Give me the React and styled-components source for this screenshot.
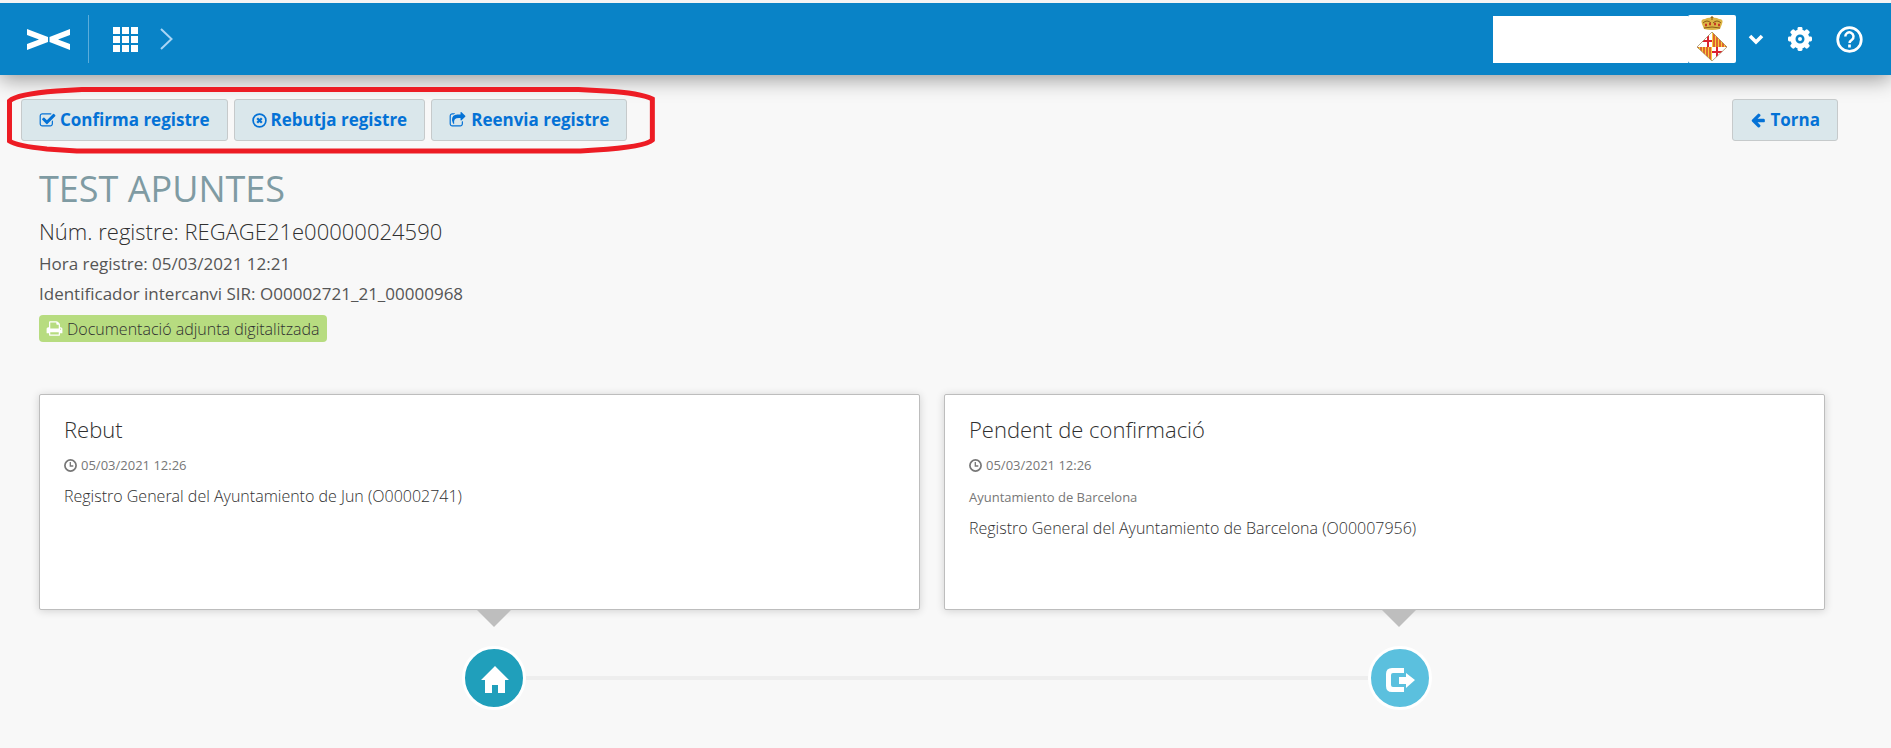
import React from 'react';
import styled, { createGlobalStyle } from 'styled-components';

const GlobalStyle = createGlobalStyle`
  *,
  *::before,
  *::after {
    box-sizing: border-box;
  }

  body {
    margin: 0;
    background: #f8f8f8;
    color: #303030;
    font-family: 'Open Sans', 'Noto Sans', sans-serif;
    font-size: 16px;
    font-weight: 300;
  }

  h1, h2, p {
    margin: 0;
    font-weight: 300;
  }

  svg {
    display: block;
    flex: none;
  }
`;

const StyledHeader = styled.header`
  display: flex;
  align-items: center;
  justify-content: space-between;
  height: 75px;
  padding: 0 28px 0 27px;
  border-top: 3px solid #f4f4f4;
  background: #0983c7;
  box-shadow: 0 4px 20px rgba(0, 0, 0, 0.4);
`;

const HeaderGroup = styled.div`
  display: flex;
  align-items: center;
`;

const HeaderLink = styled.a`
  display: flex;
  color: #fff;
`;

const Divider = styled.span`
  width: 1px;
  height: 48px;
  margin: 0 24px 0 18px;
  background: #5aaddb;
`;

const Crumb = styled.span`
  margin-left: 22px;
  color: #a9d5f5;
`;

const IconButton = styled.button`
  display: flex;
  padding: 0;
  border: 0;
  background: none;
  color: #fff;
  cursor: pointer;
`;

const Account = styled.div`
  display: flex;
  align-items: center;
  margin-right: 12px;
`;

const AccountName = styled.span`
  width: 195px;
  height: 47px;
  background: #fff;
`;

const Crest = styled.span`
  display: flex;
  justify-content: center;
  width: 48px;
  height: 48px;
  border-radius: 2px;
  background: #fff;
`;

const HeaderTools = styled.div`
  display: flex;
  align-items: center;
  gap: 24px;
`;

const Toolbar = styled.div`
  display: flex;
  align-items: center;
  justify-content: space-between;
  padding: 12px 53px 0 7px;
`;

const Actions = styled.div`
  position: relative;
  display: flex;
  gap: 6px;
  padding: 12px 28px 12px 14px;
`;

const Outline = styled.svg`
  position: absolute;
  inset: 0;
  width: 100%;
  height: 100%;
  overflow: visible;
  pointer-events: none;
`;

const Button = styled.button`
  display: flex;
  align-items: center;
  gap: ${({ $gap }) => $gap || 4}px;
  height: 42px;
  padding: 0 17px;
  border: 1px solid #c6cacb;
  border-radius: 3px;
  background: #dae7eb;
  color: #0472d6;
  font-family: inherit;
  font-size: 17px;
  font-weight: 700;
  line-height: 24px;
  white-space: nowrap;
  cursor: pointer;
`;

const Main = styled.main`
  padding: 11px 66px 0 39px;
`;

const Title = styled.h1`
  color: #7f9ba3;
  font-size: 36px;
  font-weight: 400;
  line-height: 49px;
`;

const Subtitle = styled.h2`
  font-size: 22px;
  line-height: 36px;
`;

const Meta = styled.p`
  color: #555;
  font-size: 17px;
  font-weight: 400;
  line-height: 30px;
`;

const Badge = styled.span`
  display: inline-flex;
  align-items: center;
  gap: 4px;
  height: 27px;
  margin-top: 6px;
  padding: 0 7px;
  border-radius: 4px;
  background: #b7dc80;
  white-space: nowrap;

  svg {
    color: #fff;
  }
`;

const Cards = styled.div`
  display: grid;
  grid-template-columns: 1fr 1fr;
  gap: 24px;
  margin-top: 52px;
`;

const StyledCard = styled.section`
  position: relative;
  min-height: 216px;
  padding: 15px 24px;
  border: 1px solid #bdbdbd;
  border-radius: 2px;
  background: #fff;
  box-shadow: 0 1px 8px rgba(0, 0, 0, 0.16);

  &::after {
    content: '';
    position: absolute;
    top: 100%;
    left: calc(50% - 4px);
    border: 18px solid transparent;
    border-top-color: #bebebe;
    border-bottom: 0;
  }
`;

const CardTitle = styled.h2`
  font-size: 22px;
  line-height: 39px;
`;

const CardNote = styled.p`
  display: flex;
  align-items: center;
  gap: 4px;
  color: #777;
  font-size: 13px;
  font-weight: 400;
  line-height: 32px;
`;

const CardText = styled.p`
  font-size: 16px;
  line-height: 30px;
`;

const Track = styled.div`
  display: flex;
  align-items: center;
  margin: 36px calc(25% - 53px) 0 calc(25% - 24px);
`;

const TrackLine = styled.span`
  flex: 1;
  height: 4px;
  background: #eee;
`;

const Marker = styled.span`
  display: flex;
  align-items: center;
  justify-content: center;
  width: 64px;
  height: 64px;
  padding: 4px 0 0 2px;
  border: 3px solid #fff;
  border-radius: 50%;
  background: ${({ $color }) => $color};
  color: #fff;
`;

const paths = {
  check:
    'M1472 930v318q0 119-84.5 203.5t-203.5 84.5h-832q-119 0-203.5-84.5t-84.5-203.5v-832q0-119 84.5-203.5t203.5-84.5h832q63 0 117 25 15 7 18 23 3 17-9 29l-49 49q-10 10-23 10-3 0-9-2-23-6-45-6h-832q-66 0-113 47t-47 113v832q0 66 47 113t113 47h832q66 0 113-47t47-113v-254q0-13 9-22l64-64q10-10 23-10 6 0 12 3 20 8 20 29zm231-489l-814 814q-24 24-57 24t-57-24l-430-430q-24-24-24-57t24-57l110-110q24-24 57-24t57 24l263 263 647-647q24-24 57-24t57 24l110 110q24 24 24 57t-24 57z',
  share:
    'M1472 989v259q0 119-84.5 203.5t-203.5 84.5h-832q-119 0-203.5-84.5t-84.5-203.5v-832q0-119 84.5-203.5t203.5-84.5h255q13 0 22.5 9.5t9.5 22.5q0 27-26 32-77 26-133 60-10 4-16 4h-112q-66 0-113 47t-47 113v832q0 66 47 113t113 47h832q66 0 113-47t47-113v-214q0-19 18-29 28-13 54-37 16-16 35-8 21 9 21 31zm237-496l-384 384q-18 19-45 19-12 0-25-5-39-17-39-59v-192h-160q-323 0-438 131-119 137-74 473 3 23-20 34-8 2-12 2-16 0-26-13-10-14-21-31t-39.5-68.5-49.5-99.5-38.5-114-17.5-122q0-49 3.5-91t14-90 28-88 47-81.5 68.5-74 94.5-61.5 124.5-48.5 159.5-30.5 196.5-11h160v-192q0-42 39-59 13-5 25-5 26 0 45 19l384 384q19 19 19 45t-19 45z',
  back: 'M1664 896v128q0 53-32.5 90.5t-84.5 37.5h-704l293 294q38 36 38 90t-38 90l-75 76q-37 37-90 37-52 0-91-37l-651-652q-37-37-37-90 0-52 37-91l651-650q38-38 91-38 52 0 90 38l75 74q38 38 38 91t-38 91l-293 293h704q52 0 84.5 37.5t32.5 90.5z',
  print:
    'M448 1536h896v-256h-896v256zm0-640h896v-384h-160q-40 0-68-28t-28-68v-160h-640v640zm1152 64q0-26-19-45t-45-19-45 19-19 45 19 45 45 19 45-19 19-45zm128 0v416q0 13-9.5 22.5t-22.5 9.5h-224v160q0 40-28 68t-68 28h-960q-40 0-68-28t-28-68v-160h-224q-13 0-22.5-9.5t-9.5-22.5v-416q0-79 56.5-135.5t135.5-56.5h64v-544q0-40 28-68t68-28h672q40 0 88 20t76 48l152 152q28 28 48 76t20 88v256h64q79 0 135.5 56.5t56.5 135.5z',
};

const Icon = ({ name, size = 17 }) => (
  <svg width={size} height={size} viewBox="0 0 1792 1792" fill="currentColor" aria-hidden="true">
    <path d={paths[name]} />
  </svg>
);

const RejectIcon = () => (
  <svg width="15" height="15" viewBox="0 0 15 15" fill="none" stroke="currentColor" aria-hidden="true">
    <circle cx="7.5" cy="7.5" r="6.4" strokeWidth="1.7" />
    <path d="M5.2 5.2l4.6 4.6M9.8 5.2l-4.6 4.6" strokeWidth="2.3" />
  </svg>
);

const ClockIcon = () => (
  <svg width="13" height="13" viewBox="0 0 13 13" fill="none" stroke="currentColor" aria-hidden="true">
    <circle cx="6.5" cy="6.5" r="5.6" strokeWidth="1.7" />
    <path d="M6.3 3v4h3" strokeWidth="1.3" />
  </svg>
);

const LogoIcon = () => (
  <svg width="43" height="21" viewBox="0 0 43 21" fill="currentColor" aria-hidden="true">
    <path d="M0 0L21 8V13L0 21V15L12 10.5L0 6Z" />
    <path d="M43 0L22.5 8V13L43 21V15L31 10.5L43 6Z" />
  </svg>
);

const GridIcon = () => (
  <svg width="25" height="25" viewBox="0 0 25 25" fill="currentColor" aria-hidden="true">
    {[0, 9, 18].map(y => [0, 9, 18].map(x => <rect key={`${x}-${y}`} x={x} y={y} width="7" height="7" />))}
  </svg>
);

const GearIcon = () => (
  <svg width="24" height="24" viewBox="0 0 24 24" fill="currentColor" aria-hidden="true">
    <path
      fillRule="evenodd"
      d="M12 2.5a9.5 9.5 0 1 0 0 19a9.5 9.5 0 1 0 0-19zM12 7.5a4.5 4.5 0 1 1 0 9a4.5 4.5 0 1 1 0-9z"
    />
    {[0, 45, 90, 135, 180, 225, 270, 315].map(deg => (
      <rect key={deg} x="9.5" y="0" width="5" height="6" rx="1.4" transform={`rotate(${deg} 12 12)`} />
    ))}
    <circle cx="12" cy="12" r="2" />
  </svg>
);

const CrestIcon = () => (
  <svg width="32" height="48" viewBox="0 0 32 48" aria-hidden="true">
    <path d="M6 9Q4 4 9 4Q12 2 16 3Q20 2 23 4Q28 4 26 9L24 14Q16 16 8 14Z" fill="#dcb445" />
    <path d="M7 8Q11 4 15 8M17 8Q21 4 25 8" stroke="#8a5a17" fill="none" />
    <path d="M16 1v4M14.5 2.5h3" stroke="#9a6b1c" strokeWidth="1.2" />
    <path d="M9 10h2M13 9h2M18 9h2M22 10h2" stroke="#c63a25" strokeWidth="2.4" />
    <path d="M8 13Q16 11 24 13" stroke="#8a5a17" fill="none" />
    <clipPath id="shield">
      <path d="M16 17L31 32L16 46L1 32Z" />
    </clipPath>
    <g clipPath="url(#shield)">
      <rect y="16" width="32" height="32" fill="#fff" />
      <path d="M16 16h16v16H16zM0 32h16v16H0z" fill="#f7cf3c" />
      <path
        d="M18 16v16M21 16v16M24 16v16M27 16v16M30 16v16M14 32v16M11 32v16M8 32v16M5 32v16M2 32v16"
        stroke="#d5382b"
        strokeWidth="1.4"
      />
      <path d="M12 16v16M0 26h16M21 32v16M16 37h16" stroke="#dc2430" strokeWidth="2" />
    </g>
    <path d="M16 17L31 32L16 46L1 32Z" fill="none" stroke="#9c8253" strokeWidth="0.7" />
  </svg>
);

const HomeIcon = () => (
  <svg width="28" height="28" viewBox="0 0 28 28" fill="currentColor" aria-hidden="true">
    <path d="M14 0L28 14H24V27H17V19H11V27H4V14H0Z" />
  </svg>
);

const ForwardIcon = () => (
  <svg width="30" height="24" viewBox="0 0 30 24" fill="currentColor" aria-hidden="true">
    <path d="M18 0V5H7Q5 5 5 7V17Q5 19 7 19H18V24H6Q0 24 0 18V6Q0 0 6 0Z" />
    <path d="M20 5L29 12L20 20V16H13V9H20Z" />
  </svg>
);

const cards = [
  {
    title: 'Rebut',
    date: '05/03/2021 12:26',
    text: 'Registro General del Ayuntamiento de Jun (O00002741)',
  },
  {
    title: 'Pendent de confirmació',
    date: '05/03/2021 12:26',
    note: 'Ayuntamiento de Barcelona',
    text: 'Registro General del Ayuntamiento de Barcelona (O00007956)',
  },
];

const Header = () => (
  <StyledHeader>
    <HeaderGroup>
      <HeaderLink href="#inici" aria-label="Inici">
        <LogoIcon />
      </HeaderLink>
      <Divider />
      <IconButton aria-label="Aplicacions">
        <GridIcon />
      </IconButton>
      <Crumb>
        <svg width="13" height="22" viewBox="0 0 13 22" fill="none" stroke="currentColor" strokeWidth="2">
          <path d="M1 1l10.5 10L1 21" />
        </svg>
      </Crumb>
    </HeaderGroup>
    <HeaderGroup>
      <Account>
        <AccountName />
        <Crest>
          <CrestIcon />
        </Crest>
      </Account>
      <HeaderTools>
        <IconButton aria-label="Compte">
          <svg width="16" height="12" viewBox="0 0 16 12" fill="none" stroke="currentColor" strokeWidth="3.6">
            <path d="M2 3l6 6 6-6" />
          </svg>
        </IconButton>
        <IconButton aria-label="Configuració">
          <GearIcon />
        </IconButton>
        <IconButton aria-label="Ajuda">
          <svg width="27" height="27" viewBox="0 0 27 27" fill="none" stroke="currentColor">
            <circle cx="13.5" cy="13.5" r="11.8" strokeWidth="2.7" />
            <path d="M9.3 10.5a4.1 4.1 0 1 1 6.6 3.2q-2.3 1.5-2.3 3.3" strokeWidth="2.5" />
            <path d="M13.5 18.5v3" strokeWidth="2.7" />
          </svg>
        </IconButton>
      </HeaderTools>
    </HeaderGroup>
  </StyledHeader>
);

const Card = ({ title, date, note, text }) => (
  <StyledCard>
    <CardTitle>{title}</CardTitle>
    <CardNote>
      <ClockIcon />
      {date}
    </CardNote>
    {note && <CardNote>{note}</CardNote>}
    <CardText>{text}</CardText>
  </StyledCard>
);

const App = () => (
  <>
    <GlobalStyle />
    <Header />
    <Toolbar>
      <Actions>
        <Button>
          <Icon name="check" />
          Confirma registre
        </Button>
        <Button>
          <RejectIcon />
          Rebutja registre
        </Button>
        <Button $gap={5}>
          <Icon name="share" />
          Reenvia registre
        </Button>
        <Outline viewBox="0 0 650 66" preserveAspectRatio="none" fill="none" stroke="#ed1c24" strokeWidth="5">
          <path d="M75 2.5H573L600 4Q635 6 647 12V53Q640 60 590 63L575 64H70L40 62Q10 59 2.5 54V14Q10 7 50 4Z" />
        </Outline>
      </Actions>
      <Button>
        <Icon name="back" size={16} />
        Torna
      </Button>
    </Toolbar>
    <Main>
      <Title>TEST APUNTES</Title>
      <Subtitle>Núm. registre: REGAGE21e00000024590</Subtitle>
      <Meta>Hora registre: 05/03/2021 12:21</Meta>
      <Meta>Identificador intercanvi SIR: O00002721_21_00000968</Meta>
      <Badge>
        <Icon name="print" />
        Documentació adjunta digitalitzada
      </Badge>
      <Cards>
        {cards.map(card => (
          <Card key={card.title} {...card} />
        ))}
      </Cards>
      <Track>
        <Marker $color="#209fbb">
          <HomeIcon />
        </Marker>
        <TrackLine />
        <Marker $color="#5bc0de">
          <ForwardIcon />
        </Marker>
      </Track>
    </Main>
  </>
);

export default App;
